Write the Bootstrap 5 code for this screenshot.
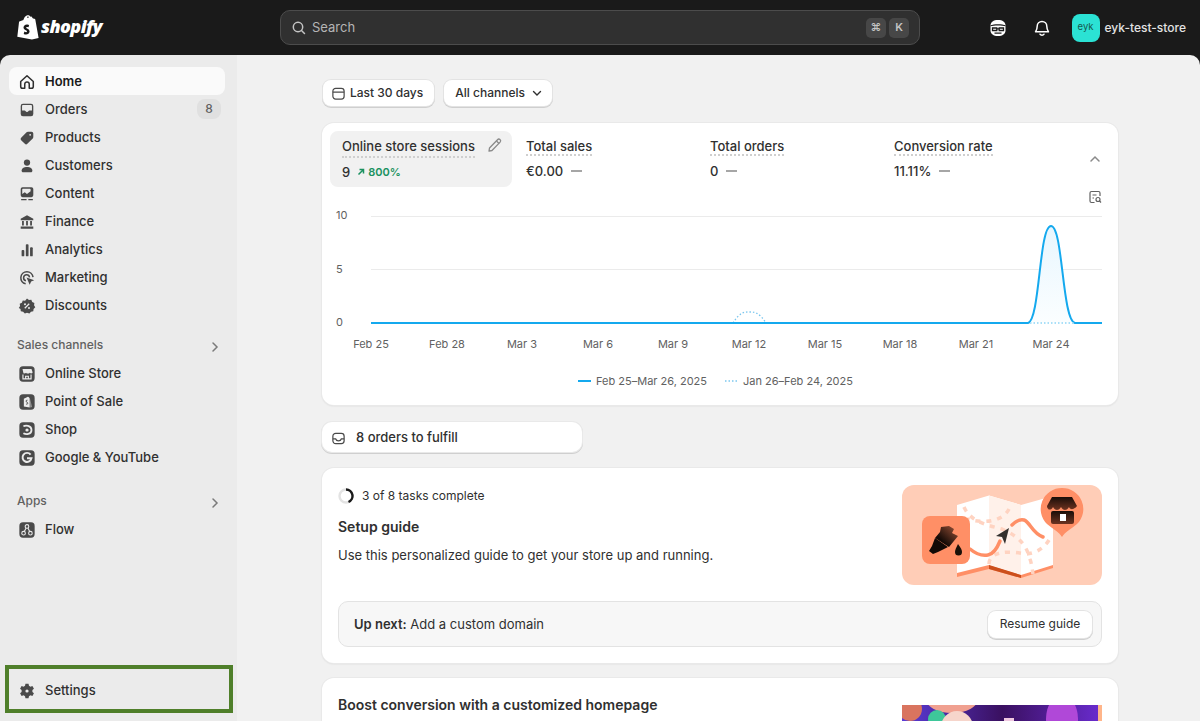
<!DOCTYPE html>
<html lang="en">
<head>
<meta charset="UTF-8">
<title>Home - Shopify</title>
<link href="https://cdn.jsdelivr.net/npm/bootstrap@5.3.0/dist/css/bootstrap.min.css" rel="stylesheet">
<style>
    html, body { height: 721px; overflow: hidden; }
    body { background: #1a1a1a; font-family: Inter, "Liberation Sans", sans-serif; font-size: 13px; color: #303030; font-weight: 500; }
    svg { display: block; flex-shrink: 0; }
    .topbar { height: 55px; background: #1a1a1a; }
    .logo-box { width: 280px; padding-left: 17px; color: #fff; }
    .logo-word { font-family: "Open Sans", sans-serif; font-style: italic; font-weight: 800; font-size: 18px; letter-spacing: -.6px; margin-left: 2px; margin-top: -2px; }
    .search-box { width: 640px; height: 35px; background: #303030; border: 1px solid #4c4c4c; border-radius: 10px; color: #b5b5b5; font-size: 13px; font-weight: 400; padding: 0 10px 0 10px; }
    .search-box svg { margin-right: 5px; }
    .key-cap { width: 20px; height: 20px; border-radius: 5px; background: #474747; color: #c4c4c4; font-size: 11px; font-weight: 600; margin-left: 3px; }
    .top-right { color: #fff; }
    .top-btn { width: 28px; }
    .store-avatar { width: 28px; height: 28px; border-radius: 8px; background: #2be2d4; color: #15594f; font-size: 9.5px; font-weight: 400; margin-left: 16px; }
    .store-name { color: #e3e3e3; font-size: 12px; margin-left: 5px; margin-right: 14px; }
    .shell { height: 666px; }
    .side-panel { width: 237px; background: #ebebeb; border-top-left-radius: 10px; padding-top: 12px; }
    .side-link { height: 28px; margin: 0 12px 0 9px; padding: 2px 4px 0 9px; border-radius: 8px; color: #303030; text-decoration: none; font-size: 13px; }
    .side-link.is-active { background: #fafafa; color: #1a1a1a; font-weight: 600; }
    .side-link svg { margin-right: 9px; }
    .side-count { background: #e0e0e0; color: #616161; font-size: 12px; height: 20px; min-width: 24px; border-radius: 8px; margin-top: -2px; }
    .side-head { height: 28px; margin: 12px 15px 0 17px; color: #616161; font-size: 12px; }
    .apps-head { margin-top: 16px; }
    .settings-wrap { margin: auto 4px 8px 5px; height: 48px; border: 4px solid #4f7f2a; }
    .settings-wrap .side-link { margin: 0; padding: 4px 0 0 9px; height: 40px; }
    .main-panel { flex: 1; background: #f1f1f1; border-top-right-radius: 10px; padding: 25px 82px 0 85px; overflow: hidden; }
    .chip-row { gap: 10px; padding-left: 1px; }
    .chip-btn { height: 26px; background: #fff; border-radius: 8px; box-shadow: 0 0 0 1px #e3e3e3, 0 1px 0 1px #cfcfcf; color: #303030; font-size: 12px; padding: 0 11px 0 8px; }
    .chip-btn svg { margin-right: 4px; }
    .chip-menu { padding: 0 8px 0 11px; }
    .chip-menu svg { margin: 0 0 0 5px; }
    .panel-card { background: #fff; border-radius: 12px; box-shadow: 0 0 0 1px #e9e9e9, 0 1px 2px rgba(0,0,0,.12); }
    .stats-card { margin-top: 17px; }
    .metric-row { padding: 8px 0 0 8px; height: 64px; }
    .metric-tile { width: 184px; height: 56px; padding: 6px 12px; border-radius: 8px; }
    .metric-tile.is-on { width: 182px; margin-right: 2px; background: #f1f1f1; padding-right: 9px; }
    .metric-name { font-size: 13px; line-height: 19px; border-bottom: 2px dotted #cfcfcf; color: #303030; }
    .metric-val { font-size: 13px; line-height: 20px; margin-top: 4px; gap: 8px; }
    .metric-val.has-trend { gap: 6px; }
    .metric-up { color: #1a9160; font-size: 11px; font-weight: 600; }
    .metric-up svg { margin-right: 2px; }
    .metric-dash { width: 11px; height: 2px; background: #a6a6a6; }
    .collapse-toggle { align-self: center; margin: 0 16px 0 auto; }
    .fulfill-btn { width: 260px; height: 30px; background: #fff; border-radius: 10px; box-shadow: 0 0 0 1px #e9e9e9, 0 1px 0 1px #cfcfcf; padding: 2px 9px 0; margin: 17px 0 16px; font-size: 13px; }
    .fulfill-btn svg { margin-right: 10px; }
    .guide-card { height: 195px; padding: 17px 16px 0; }
    .task-note { font-size: 12px; font-weight: 400; height: 22px; }
    .guide-title { font-size: 14px; font-weight: 600; margin: 10px 0 0; line-height: 20px; }
    .guide-copy { font-size: 13px; font-weight: 400; margin: 8px 0 0; line-height: 20px; }
    .next-box { height: 46px; margin-top: 16px; background: #f7f7f7; border: 1px solid #e3e3e3; border-radius: 10px; padding: 0 9px 0 15px; font-size: 13px; font-weight: 400; }
    .next-box b { font-weight: 600; }
    .next-label { padding-top: 2px; }
    .resume-btn { height: 27px; width: 104px; background: #fff; border-radius: 8px; box-shadow: 0 0 0 1px #e3e3e3, 0 1px 0 1px #cfcfcf; font-size: 12px; }
    .boost-card { height: 200px; margin-top: 15px; padding: 17px 16px 0; }
    .boost-title { font-size: 14px; font-weight: 600; line-height: 20px; margin-top: 0; }
    .boost-art { width: 200px; margin-top: 10px; height: 60px; }
    .chart-text { font-family: Inter, "Liberation Sans", sans-serif; font-size: 11px; fill: #616161; font-weight: 400; }
</style>
</head>
<body>

<header class="topbar d-flex align-items-center">
    <div class="logo-box d-flex align-items-center">
        <svg width="22" height="26" viewBox="0 0 22 26"><path fill="#fff" d="M16 3.6 14.8 1.900c-.3-.4-.7-.5-1-.4l-.5.2C12.700.7 11.900.3 11 .3 8.600.3 7 3 6.400 5.100L3 6.200c-.7.2-.9.400-1 1.100L.3 21.800 14.900 24.500 21.600 23 18.300 4.500C18.200 4 17.800 3.700 17.400 3.700ZM11.900 2.400 10 3 10.700 1.200C11.200 1.200 11.600 1.700 11.900 2.400Z"/><path fill="#1a1a1a" d="M10.500 9.500c-2.500-.3-4 1.300-4 3 0 2.600 3.500 2.500 3.500 4 0 .8-1.200 1-2.600.1l-.7 2.300c1.900 1 5.700.9 5.900-2.300.1-2.800-3.500-3-3.500-4.100 0-.6 1-.8 2.400-.3l.6-2.300Z"/></svg>
        <span class="logo-word">shopify</span>
    </div>
    <div class="search-box d-flex align-items-center">
        <svg width="16" height="16" viewBox="0 0 16 16" fill="none" stroke="#c4c4c4" stroke-width="1.500"><circle cx="7" cy="7" r="4.700"/><path d="m10.500 10.500 3 3" stroke-linecap="round"/></svg>
        <span class="flex-grow-1">Search</span>
        <span class="key-cap d-flex align-items-center justify-content-center">⌘</span>
        <span class="key-cap d-flex align-items-center justify-content-center">K</span>
    </div>
    <div class="top-right ms-auto d-flex align-items-center">
        <div class="top-btn me-3">
            <svg width="20" height="20" viewBox="0 0 20 20" class="ms-1"><path fill="#fff" d="M10 2c-4.500 0-7.500 2-7.500 5.500v5c0 3.500 3 5.500 7.500 5.500s7.500-2 7.500-5.500v-5C17.500 4 14.500 2 10 2Z"/><path fill="#1a1a1a" d="M2.500 7.300c3-1.500 12-1.500 15 0v1c-3-1-12-1-15 0Z"/><path fill="none" stroke="#1a1a1a" stroke-width="1.300" d="M4.500 10h4.300v2.500H4.500ZM11.200 10h4.300v2.500h-4.300ZM8.800 10.800h2.400M6.500 15.200h7"/></svg>
        </div>
        <div class="top-btn">
            <svg width="20" height="20" viewBox="0 0 20 20" fill="none" stroke="#fff" stroke-width="1.500" class="ms-1"><path d="M5.200 8.200a4.800 4.800 0 0 1 9.600 0c0 3 .6 4 1.700 5.600H3.500C4.600 12.200 5.200 11.200 5.200 8.200Z" stroke-linejoin="round"/><path d="M8 16.200c.8 1.300 3.200 1.300 4 0" stroke-linecap="round"/></svg>
        </div>
        <div class="store-avatar d-flex align-items-center justify-content-center">eyk</div>
        <span class="store-name">eyk-test-store</span>
    </div>
</header>

<div class="shell d-flex">
    <nav class="side-panel d-flex flex-column">
        <a class="side-link is-active d-flex align-items-center" href="#">
            <svg width="18" height="18" viewBox="0 0 20 20" fill="none" stroke="#303030" stroke-width="1.700" stroke-linejoin="round"><path d="M3 9.500 10 3l7 6.500V15a2 2 0 0 1-2 2h-2.500v-4.500a2.500 2.500 0 0 0-5 0V17H5a2 2 0 0 1-2-2Z"/></svg>
            Home</a>
        <a class="side-link d-flex align-items-center" href="#">
            <svg width="18" height="18" viewBox="0 0 20 20" fill="#4a4a4a"><path fill-rule="evenodd" d="M5.500 3h9A2.500 2.500 0 0 1 17 5.500v9a2.500 2.500 0 0 1-2.500 2.500h-9A2.500 2.500 0 0 1 3 14.500v-9A2.500 2.500 0 0 1 5.500 3Zm-1 7.500h2.800c.5 0 .8.300 1 .7.300.7 1 1.100 1.700 1.100s1.400-.4 1.700-1.100c.2-.4.500-.7 1-.7h2.800V5.500a1 1 0 0 0-1-1h-9a1 1 0 0 0-1 1Z"/></svg>
            Orders<span class="side-count ms-auto d-flex align-items-center justify-content-center">8</span></a>
        <a class="side-link d-flex align-items-center" href="#">
            <svg width="18" height="18" viewBox="0 0 20 20" fill="#4a4a4a"><path d="M11 3h4a2 2 0 0 1 2 2v4c0 .6-.2 1.100-.6 1.500l-6 6a2 2 0 0 1-2.800 0l-4.100-4.100a2 2 0 0 1 0-2.800l6-6C9.900 3.200 10.400 3 11 3Zm2.500 2.500a1 1 0 1 0 0 2 1 1 0 0 0 0-2Z"/></svg>
            Products</a>
        <a class="side-link d-flex align-items-center" href="#">
            <svg width="18" height="18" viewBox="0 0 20 20" fill="#4a4a4a"><circle cx="10" cy="6.200" r="3.500"/><path d="M10 11c-3.500 0-6 1.700-6 4.300 0 1 .7 1.700 1.700 1.700h8.600c1 0 1.700-.7 1.700-1.700C16 12.700 13.500 11 10 11Z"/></svg>
            Customers</a>
        <a class="side-link d-flex align-items-center" href="#">
            <svg width="18" height="18" viewBox="0 0 20 20" fill="#4a4a4a"><path fill-rule="evenodd" d="M5 2.500h10A2 2 0 0 1 17 4.500v7a2 2 0 0 1-2 2H5a2 2 0 0 1-2-2v-7a2 2 0 0 1 2-2Zm.5 1.700a.8.800 0 0 0-.8.800v5l2.800-2 2.500 2 4-3V5a.8.800 0 0 0-.8-.8Z"/><path d="M3.500 15.500h6v1.500h-6Zm8 0h5v1.500h-5Z"/></svg>
            Content</a>
        <a class="side-link d-flex align-items-center" href="#">
            <svg width="18" height="18" viewBox="0 0 20 20" fill="#4a4a4a"><path d="M10 2.500 17 6.500V8H3V6.500ZM4.500 9h2v5h-2Zm4.500 0h2v5H9Zm4.500 0h2v5h-2ZM3 15h14v2.500H3Z"/></svg>
            Finance</a>
        <a class="side-link d-flex align-items-center" href="#">
            <svg width="18" height="18" viewBox="0 0 20 20" fill="#4a4a4a"><rect x="4" y="10" width="3" height="7" rx="1"/><rect x="8.700" y="3.500" width="3" height="13.500" rx="1"/><rect x="13.400" y="7" width="3" height="10" rx="1"/></svg>
            Analytics</a>
        <a class="side-link d-flex align-items-center" href="#">
            <svg width="18" height="18" viewBox="0 0 20 20" fill="none" stroke="#4a4a4a" stroke-width="1.700"><path d="M8.500 16.500A6.800 6.800 0 1 1 16.700 9"/><path d="M8.800 13a3.300 3.300 0 1 1 4-3.700"/><path fill="#4a4a4a" stroke="none" d="m9.500 9.500 8.500 3-3.400 1.500L13 17.500Z"/></svg>
            Marketing</a>
        <a class="side-link d-flex align-items-center" href="#">
            <svg width="18" height="18" viewBox="0 0 20 20"><path fill="#4a4a4a" d="m10 1.800 2.200 1.500 2.600-.2 1 2.400 2.400 1.200-.4 2.600 1.400 2.200-1.900 1.800-.3 2.600-2.600.5-1.700 2-2.700-1-2.400 1-1.900-2-2.600-.5-.3-2.600L.9 12.300l1.400-2.200-.4-2.600 2.400-1.200 1-2.400 2.600.2Z"/><circle cx="7.800" cy="8" r="1.100" fill="#ebebeb"/><circle cx="12.200" cy="12.200" r="1.100" fill="#ebebeb"/><path d="m12.500 7.500-5 5" stroke="#ebebeb" stroke-width="1.300"/></svg>
            Discounts</a>

        <div class="side-head d-flex align-items-center justify-content-between">Sales channels
            <svg width="14" height="14" viewBox="0 0 14 14" fill="none" stroke="#7a7a7a" stroke-width="1.500" stroke-linecap="round" class="mt-1"><path d="m5 3 4 4-4 4"/></svg></div>
        <a class="side-link d-flex align-items-center" href="#">
            <svg width="18" height="18" viewBox="0 0 20 20"><rect x="1.500" y="1.500" width="17" height="17" rx="4" fill="#4a4a4a"/><path fill="#ebebeb" d="M5 4.500h10l1.200 3.500c0 1.500-2.300 1.800-3.100.5-.8 1.300-3.400 1.300-4.200 0-.8 1.300-3.100 1-3.100-.5Z"/><path fill="none" stroke="#ebebeb" stroke-width="1.300" d="M5.500 10.500v5h9v-5M8.500 15.500V12.500h3v3"/></svg>
            Online Store</a>
        <a class="side-link d-flex align-items-center" href="#">
            <svg width="18" height="18" viewBox="0 0 20 20"><rect x="1.500" y="1.500" width="17" height="17" rx="4" fill="#4a4a4a"/><path fill="#ebebeb" d="M6.500 6.500 11 4.200c.8 0 2 1.300 2 2.300v9.500l-6.500-1Zm7.500 0 1 9-1 .5Z"/><path fill="none" stroke="#4a4a4a" stroke-width="1.100" d="M10.500 8c-2-.3-2 1.800-.5 2.300 1.500.5 1 2.500-1 2"/></svg>
            Point of Sale</a>
        <a class="side-link d-flex align-items-center" href="#">
            <svg width="18" height="18" viewBox="0 0 20 20"><rect x="1.500" y="1.500" width="17" height="17" rx="4" fill="#4a4a4a"/><path fill="none" stroke="#ebebeb" stroke-width="2" d="M6 6c2-1.500 9-1.500 9 4s-6.500 5-9 3.500"/><circle cx="10" cy="10" r="1.800" fill="#ebebeb"/></svg>
            Shop</a>
        <a class="side-link d-flex align-items-center" href="#">
            <svg width="18" height="18" viewBox="0 0 20 20"><rect x="1.500" y="1.500" width="17" height="17" rx="4" fill="#4a4a4a"/><path fill="none" stroke="#ebebeb" stroke-width="2.200" d="M14 6.200a5 5 0 1 0 1 4H10"/></svg>
            Google &amp; YouTube</a>

        <div class="side-head apps-head d-flex align-items-center justify-content-between">Apps
            <svg width="14" height="14" viewBox="0 0 14 14" fill="none" stroke="#7a7a7a" stroke-width="1.500" stroke-linecap="round" class="mt-1"><path d="m5 3 4 4-4 4"/></svg></div>
        <a class="side-link d-flex align-items-center" href="#">
            <svg width="18" height="18" viewBox="0 0 20 20"><rect x="1.500" y="1.500" width="17" height="17" rx="4" fill="#4a4a4a"/><g fill="none" stroke="#ebebeb" stroke-width="1.200"><circle cx="10" cy="6" r="2"/><circle cx="6.200" cy="13.500" r="2"/><circle cx="13.800" cy="13.500" r="2"/><path d="m9 7.800-2 3.800M11 7.800l2 3.800"/></g></svg>
            Flow</a>

        <div class="settings-wrap">
            <a class="side-link d-flex align-items-center" href="#">
                <svg width="18" height="18" viewBox="0 0 20 20"><path fill="#4a4a4a" d="M8.300 2h3.400l.5 2.300 1.600.9 2.200-.8 1.700 3-1.700 1.500v2.200l1.700 1.500-1.700 3-2.200-.8-1.600.9-.5 2.300H8.300l-.5-2.300-1.600-.9-2.200.8-1.700-3 1.700-1.500V8.900L2.300 7.400l1.700-3 2.200.8 1.600-.9Z"/><circle cx="10" cy="10" r="1.800" fill="#ebebeb"/></svg>
                Settings</a>
        </div>
    </nav>

    <main class="main-panel">
        <div class="d-flex chip-row">
            <div class="chip-btn d-flex align-items-center">
                <svg width="15" height="15" viewBox="0 0 16 16" fill="none" stroke="#4a4a4a" stroke-width="1.300"><rect x="2" y="2.500" width="12" height="11.500" rx="3"/><path d="M2 6.500h12"/></svg>
                Last 30 days</div>
            <div class="chip-btn chip-menu d-flex align-items-center">
                All channels
                <svg width="14" height="14" viewBox="0 0 14 14" fill="none" stroke="#303030" stroke-width="1.400" stroke-linecap="round"><path d="m3.500 5.500 3.500 3.500 3.500-3.500"/></svg></div>
        </div>

        <section class="panel-card stats-card">
            <div class="metric-row d-flex">
                <div class="metric-tile is-on">
                    <div class="d-flex justify-content-between align-items-start">
                        <span class="metric-name">Online store sessions</span>
                        <svg width="16" height="16" viewBox="0 0 16 16" fill="none" stroke="#8a8a8a" stroke-width="1.300"><path d="m2.500 11 8-8.300a1.700 1.700 0 0 1 2.600 2.400L5 13.500l-3 .7Z" stroke-linejoin="round"/><path d="m9.500 4 2.500 2.500"/></svg>
                    </div>
                    <div class="metric-val has-trend d-flex align-items-center">9
                        <span class="metric-up d-flex align-items-center"><svg width="10" height="10" viewBox="0 0 10 10" fill="none" stroke="#1a9160" stroke-width="1.500"><path d="M2.500 7.500 7.500 2.500M3.500 2.500h4v4"/></svg>800%</span></div>
                </div>
                <div class="metric-tile"><span class="metric-name">Total sales</span>
                    <div class="metric-val d-flex align-items-center">€0.00 <span class="metric-dash"></span></div></div>
                <div class="metric-tile"><span class="metric-name">Total orders</span>
                    <div class="metric-val d-flex align-items-center">0 <span class="metric-dash"></span></div></div>
                <div class="metric-tile"><span class="metric-name">Conversion rate</span>
                    <div class="metric-val d-flex align-items-center">11.11% <span class="metric-dash"></span></div></div>
                <svg width="14" height="14" viewBox="0 0 14 14" fill="none" stroke="#8a8a8a" stroke-width="1.500" stroke-linecap="round" class="collapse-toggle"><path d="m3 9 4-4 4 4"/></svg>
            </div>
            <svg width="796" height="218" viewBox="322 187 796 218">
                <defs><linearGradient id="peakFill" x1="0" x2="0" y1="0" y2="1"><stop offset="0" stop-color="#e8f6fe"/><stop offset="1" stop-color="#fbfeff"/></linearGradient></defs>
                <g fill="none" stroke="#616161" stroke-width="1.200"><path d="M1094.500 191.500h-3a1.500 1.500 0 0 0-1.500 1.500v8a1.500 1.500 0 0 0 1.500 1.500h3M1094.500 191.500h4a1.500 1.500 0 0 1 1.500 1.500v3M1092.500 195h4M1092.500 198h1.500"/><circle cx="1098" cy="199.500" r="2"/><path d="m1099.500 201 1.500 1.500"/></g>
                <g stroke="#ebebeb"><path d="M371 216.500h731M371 269.500h731"/></g>
                <text class="chart-text" x="336" y="219">10</text>
                <text class="chart-text" x="336" y="273">5</text>
                <text class="chart-text" x="336" y="326">0</text>
                <path d="M733 323C740 312 744 312 749 312S759 312 766 323" fill="none" stroke="#7cc7ee" stroke-width="1.300" stroke-dasharray="1.500 2"/>
                <path d="M1029 323C1040 320 1040 226 1051 226S1062 320 1075 323Z" fill="url(#peakFill)"/>
                <path d="M371 323H1028C1040 320 1039 226 1051 226S1062 320 1075 323H1102" fill="none" stroke="#14a9ee" stroke-width="2"/>
                <path d="M1030 323h44" stroke="#a9dff8" stroke-width="2" stroke-dasharray="1.500 2"/>
                <g text-anchor="middle">
                    <text class="chart-text" x="371" y="348">Feb 25</text>
                    <text class="chart-text" x="447" y="348">Feb 28</text>
                    <text class="chart-text" x="522" y="348">Mar 3</text>
                    <text class="chart-text" x="598" y="348">Mar 6</text>
                    <text class="chart-text" x="673" y="348">Mar 9</text>
                    <text class="chart-text" x="749" y="348">Mar 12</text>
                    <text class="chart-text" x="825" y="348">Mar 15</text>
                    <text class="chart-text" x="900" y="348">Mar 18</text>
                    <text class="chart-text" x="976" y="348">Mar 21</text>
                    <text class="chart-text" x="1051" y="348">Mar 24</text>
                </g>
                <path d="M578 381h13" stroke="#14a9ee" stroke-width="2"/>
                <text class="chart-text" x="596" y="385">Feb 25–Mar 26, 2025</text>
                <path d="M725 381h13" stroke="#7cc7ee" stroke-width="1.500" stroke-dasharray="1.500 2"/>
                <text class="chart-text" x="743" y="385">Jan 26–Feb 24, 2025</text>
            </svg>
        </section>

        <div class="fulfill-btn d-flex align-items-center">
            <svg width="15" height="15" viewBox="0 0 16 16" fill="none" stroke="#4a4a4a" stroke-width="1.300"><rect x="2" y="2.500" width="12" height="11" rx="3"/><path d="M2 8.500h3c.5 1.500 1.500 2 3 2s2.500-.5 3-2h3"/></svg>
            8 orders to fulfill</div>

        <section class="panel-card guide-card">
            <div class="d-flex justify-content-between">
                <div>
                    <div class="task-note d-flex align-items-center">
                        <svg width="16" height="16" viewBox="0 0 16 16" fill="none" stroke-width="2.400" class="me-2"><circle cx="8" cy="8" r="6.500" stroke="#e3e3e3"/><path d="M8 1.500a6.500 6.500 0 0 1 2.500 12.500" stroke="#1a1a1a"/></svg>
                        3 of 8 tasks complete</div>
                    <h2 class="guide-title">Setup guide</h2>
                    <p class="guide-copy">Use this personalized guide to get your store up and running.</p>
                </div>
                <svg width="200" height="100" viewBox="0 0 200 100">
                    <defs>
                        <linearGradient id="brushTone" x1="1" y1="0" x2="0" y2="1"><stop offset="0" stop-color="#a0553a"/><stop offset=".7" stop-color="#140a06"/></linearGradient>
                        <linearGradient id="shopTone" x1="0" y1="0" x2="0" y2="1"><stop offset="0" stop-color="#1a0d08"/><stop offset="1" stop-color="#6e3320"/></linearGradient>
                    </defs>
                    <rect width="200" height="100" rx="12" fill="#ffcdb7"/>
                    <path d="M55 24 87 14 119 24 151 14V83L119 93 87 84 55 92Z" fill="#ff8f66"/>
                    <path d="M55 20 87 10.500 119 20 151 11V80L119 90 87 80 55 88Z" fill="#fff"/>
                    <path d="M87 10.500 119 20V90L87 80Z" fill="#fff1ea"/>
                    <path d="M87 80 119 90V93L87 84Z" fill="#cc4f1c"/>
                    <path d="M62 22c6 14 22 18 38 22 14 6 24 14 28 30 2 6 2 10 3 15M107 24c-5 10-20 16-42 10M87 79c0-12 18-14 36-10 8 0 18-4 24-14" fill="none" stroke="#ffd3c1" stroke-width="3.500" stroke-dasharray="5 6"/>
                    <path d="M68 64c6 5 13 7 18 6 6-1 10-9 12-14" fill="none" stroke="#ff8f66" stroke-width="3.500" stroke-linecap="round"/>
                    <path d="M110 40c4-4 8-6 12-5 6 2 8 13 19 17" fill="none" stroke="#ff8f66" stroke-width="3.500" stroke-linecap="round"/>
                    <rect x="20" y="31" width="48" height="48" rx="8" fill="#ff8f66"/>
                    <path d="M39 42 47 41 52 44 50 48 56 51 47 62 33 53 38 47Z" fill="url(#brushTone)"/><path d="M33 53 46 62 36 67 31 69 27 66 30 61Z" fill="#120906"/>
                    <path d="M56 59c3 4 4 6 4 8a3.500 3.500 0 0 1-7 0c0-2 1-4 3-8Z" fill="#1a1008"/>
                    <path d="M94 51 107 43 103 59 100 52Z" fill="#33302e"/>
                    <path d="M160 3a21 21 0 0 1 15 36c-6 5-12 8-15 13-3-5-9-8-15-13A21 21 0 0 1 160 3Z" fill="#ff8f66"/>
                    <path d="M150 12h20l5 9c-3 4-7 4-8 1-2 4-6 4-8 0-2 4-6 4-8 0-2 4-6 3-6-1Z" fill="url(#shopTone)"/>
                    <rect x="149" y="26" width="23" height="13" rx="2" fill="url(#shopTone)"/><rect x="158" y="29" width="6" height="7" fill="#fff"/>
                </svg>
            </div>
            <div class="next-box d-flex align-items-center justify-content-between">
                <span class="next-label"><b>Up next:</b> Add a custom domain</span>
                <span class="resume-btn d-flex align-items-center justify-content-center">Resume guide</span>
            </div>
        </section>

        <section class="panel-card boost-card d-flex justify-content-between">
            <h2 class="boost-title">Boost conversion with a customized homepage</h2>
            <svg width="200" height="60" viewBox="0 0 200 60" class="boost-art">
                <defs><linearGradient id="boostBg" x1="0" x2="1"><stop offset="0" stop-color="#5a3cd8"/><stop offset=".5" stop-color="#3a1060"/><stop offset="1" stop-color="#6a2cd0"/></linearGradient></defs>
                <rect width="200" height="60" fill="url(#boostBg)"/>
                <circle cx="8" cy="4" r="12" fill="#d9745f"/><ellipse cx="50" cy="-6" rx="26" ry="14" fill="#f0a090"/>
                <circle cx="35" cy="14" r="9" fill="#3ec79a"/><circle cx="55" cy="22" r="16" fill="#f6d5cb"/>
                <ellipse cx="160" cy="14" rx="16" ry="24" fill="#b048d8"/><rect x="196" width="4" height="30" fill="#ffb58a"/>
                <rect x="102" y="13" width="10" height="20" fill="#f0c8e0"/>
            </svg>
        </section>
    </main>
</div>
</body>
</html>
